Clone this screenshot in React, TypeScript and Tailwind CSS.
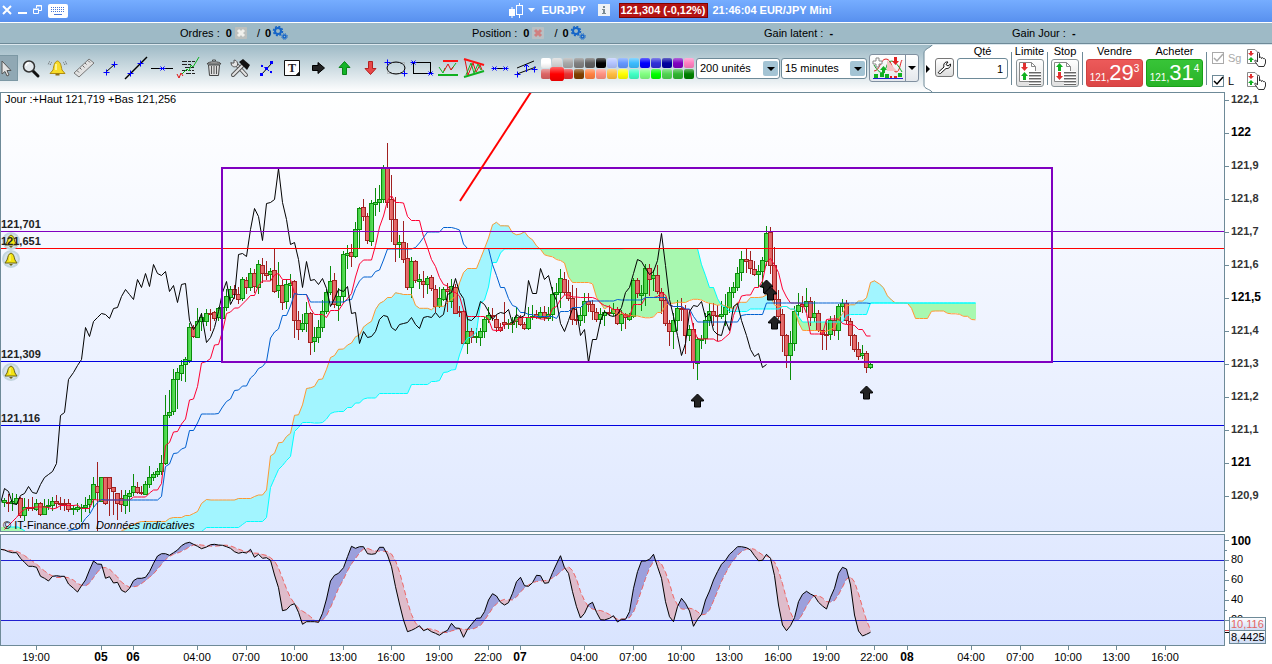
import type { ReactNode } from 'react';
import { clsx } from 'clsx';

const FONT = 'font-["Liberation_Sans",Arial,sans-serif]';

/* ---------- market data (plot units) ---------- */

// g = up, r = down; high/body top/body bottom/low
const RAW = `g498/500/502/506 r494/502/502/511 g493/501/503/510 g494/498/503/504 r497/498/515/517 g498/507/515/520
r499/507/508/510 r497/507/508/510 g499/503/509/510 r502/503/514/515 g499/506/514/514 g499/505/506/509
g497/501/505/510 r495/501/503/507 r497/503/503/509 r499/503/504/510 r499/503/509/511 g505/508/509/514
g503/507/509/511 g504/507/508/521 g497/505/507/511 g495/499/504/512 g477/484/499/507 r462/486/492/537
g477/477/501/501 r477/477/503/504 r477/477/488/515 r487/487/491/514 r493/493/503/519 r490/498/504/511
g490/495/505/513 g490/493/496/511 g474/486/492/495 r482/487/492/493 r486/492/493/494 g481/484/494/494
g466/477/484/487 g472/474/477/480 g468/471/474/476 g455/463/471/474 g395/415/463/464 g390/412/415/417
g369/379/411/414 g368/372/379/408 g360/365/373/380 g357/359/364/381 g323/327/360/362 r325/327/336/337
g308/321/337/337 g313/317/321/330 g309/313/321/325 r309/313/314/330 r311/312/318/320 g307/308/317/320
g300/307/318/322 g289/296/307/310 g286/289/297/300 r285/289/294/298 r287/294/299/303 g277/279/298/300
r277/280/287/293 g268/273/287/290 r269/273/286/292 g260/264/287/293 r258/265/273/282 r261/273/275/279
g268/271/274/280 r249/270/291/292 g262/285/290/297 r280/285/302/309 g279/284/301/308 g274/283/285/297
r280/281/320/337 r311/320/329/339 g314/323/329/331 g302/313/323/331 r312/313/342/354 g327/337/341/351
g320/327/337/342 g300/311/327/331 g289/292/311/313 g266/281/292/294 r273/280/304/307 g288/296/305/320
g251/254/296/302 g245/253/255/268 r244/252/256/266 g222/229/256/257 g207/208/229/247 r199/207/216/220
r213/216/240/243 g200/203/241/245 g188/202/204/215 g185/199/202/211 g165/168/199/202 r143/168/202/207
r175/199/219/241 r197/219/244/261 g235/242/244/257 r221/242/259/262 r243/258/287/289 g257/261/287/297
r260/261/280/282 g274/279/281/288 r271/281/284/297 g276/278/284/293 r275/277/288/290 r285/289/306/311
g287/298/306/307 g287/289/299/300 r283/289/291/311 g279/286/301/307 r284/287/313/313 r306/311/312/316
r310/311/343/344 g317/331/343/353 r328/331/337/342 g328/336/337/342 g328/331/337/345 g317/319/331/337
g307/315/319/322 r308/315/316/320 r315/319/327/331 r323/327/330/331 r302/322/324/328 g319/323/324/328
g317/322/324/332 g307/317/321/327 r315/317/324/325 r322/324/328/329 g307/317/328/329 g305/316/317/319
r310/314/317/318 g307/312/317/318 r306/312/317/320 g307/314/318/320 g287/294/314/320 g283/292/294/300
g269/278/292/307 r272/279/292/294 r280/292/298/300 r285/298/319/324 r288/319/320/324 g307/315/320/325
g293/301/315/322 r293/301/304/311 r300/304/311/319 r308/312/319/321 g308/314/319/323 g310/312/315/325
r305/312/313/315 g303/309/313/315 r307/309/323/324 g310/314/323/330 r313/314/317/328 g313/315/319/320
g278/280/316/317 r278/280/293/297 g285/293/295/310 g264/268/293/305 r264/268/279/295 g270/275/278/290
r265/275/291/293 r288/292/300/313 r297/300/323/325 r320/323/331/345 g313/320/331/348 g300/308/320/330
r298/308/309/320 r305/309/335/353 g325/329/335/340 r323/329/362/368 g337/339/363/379 g335/339/340/348
g313/320/338/343 g303/311/320/325 r303/311/315/325 r305/315/316/340 g301/314/316/318 g294/307/314/325
g287/292/307/312 g282/287/292/297 g267/273/287/290 g251/259/272/280 r249/259/261/272 r251/260/268/273
r261/269/274/275 g265/271/274/286 g257/260/271/287 g226/233/261/265 r227/232/265/273 r247/265/299/303
r290/299/316/318 r309/314/335/351 r334/335/355/367 g331/343/355/379 g306/311/343/350 g293/305/311/315
r296/304/306/312 g288/301/306/312 r297/301/317/325 g301/313/317/321 r310/313/330/331 r330/330/334/349
r320/334/335/349 g316/320/334/339 r315/320/330/335 g304/306/330/339 g299/303/306/311 r300/303/320/323
r318/321/335/345 r334/335/349/351 r342/349/356/359 g345/353/355/358 r351/353/367/372 g363/364/367/368`;

type Candle = { up: boolean; high: number; top: number; bottom: number; low: number };
type Point = [number, number];

const CANDLES: Candle[] = RAW.split(/\s+/).map((token) => {
	const [high, top, bottom, low] = token.slice(1).split('/').map(Number);
	return { up: token[0] === 'g', high, top, bottom, low };
});

// %K, in thirds of a unit below the top of the pane
const STOCH = [
	73, 75, 80, 83, 83, 100, 112, 124, 124, 127, 154, 160, 168, 154, 152, 154, 154, 177, 190, 201, 182, 165, 135, 108,
	117, 118, 160, 155, 174, 172, 196, 202, 190, 167, 160, 160, 157, 140, 115, 93, 86, 86, 91, 83, 75, 62, 55, 52, 58,
	64, 71, 66, 59, 58, 60, 61, 65, 70, 80, 85, 82, 84, 73, 97, 88, 100, 98, 106, 150, 188, 257, 254, 241, 236, 262,
	298, 290, 290, 290, 292, 265, 222, 168, 151, 145, 128, 95, 64, 70, 65, 65, 86, 88, 86, 67, 67, 90, 125, 185, 237,
	285, 320, 316, 310, 302, 317, 312, 320, 325, 331, 322, 316, 295, 309, 310, 337, 313, 298, 280, 279, 260, 225, 206,
	213, 232, 240, 233, 205, 170, 157, 182, 184, 173, 151, 152, 175, 173, 143, 117, 92, 128, 145, 200, 245, 279, 265,
	239, 232, 262, 284, 285, 280, 272, 291, 283, 283, 260, 190, 140, 108, 108, 103, 88, 125, 160, 230, 275, 290, 245,
	220, 235, 258, 304, 283, 268, 225, 198, 165, 140, 118, 106, 88, 77, 65, 65, 68, 75, 92, 107, 106, 88, 100, 152,
	240, 300, 317, 302, 278, 230, 208, 199, 207, 213, 232, 243, 252, 217, 190, 145, 127, 132, 180, 270, 318, 333, 328,
	322,
];

const xAt = (i: number) => Math.round(4 + i * 4.03) + 0.5;
const close = (c: Candle) => (c.up ? c.top : c.bottom);

function midpoint(i: number, period: number) {
	const part = CANDLES.slice(i - period + 1, i + 1);
	return (Math.min(...part.map((c) => c.high)) + Math.max(...part.map((c) => c.low))) / 2;
}

const TENKAN_START = [529, 525, 521, 517, 512, 509, 507, 507];
const KIJUN_START = [530, 529, 529, 524, 518, 514, 507, 502, 499];
const SPAN_A_START = [
	530, 529, 526, 524, 522, 521, 521, 521, 521, 521, 521, 521, 518, 517, 517, 517, 515, 515, 513, 511, 503, 499,
];
const SPAN_B_START = [
	...Array(20).fill(540),
	531, 527, 527, 527, 527, 527, 527, 527, 527, 527, 524, 521, 521, 521, 521, 521, 517, 487, 478, 469, 465, 460, 456,
	431, 427, 422, 422, 422,
];

const tenkanAt = (i: number) => (i < 8 ? TENKAN_START[i] : midpoint(i, 9));
const kijunAt = (i: number) => (i < 25 ? KIJUN_START[i - 16] : midpoint(i, 26));
const spanAAt = (i: number) => (i < 51 ? SPAN_A_START[i - 29] : (tenkanAt(i - 26) + kijunAt(i - 26)) / 2);
const spanBAt = (i: number) => (i < 77 ? SPAN_B_START[i - 29] : midpoint(i - 26, 52));

function series(from: number, to: number, fn: (i: number) => number): Point[] {
	return Array.from({ length: to - from + 1 }, (_, n) => [xAt(from + n), fn(from + n)] as Point);
}

const TENKAN = series(0, 215, tenkanAt);
const KIJUN = series(16, 215, kijunAt);
const SPAN_A = series(29, 241, spanAAt);
const SPAN_B = series(29, 241, spanBAt);
const CHIKOU = series(-1, 189, (i) => close(CANDLES[i + 26]));
const STOCH_K: Point[] = STOCH.map((v, n) => [xAt(n - 1), 525 + v / 3]);
const STOCH_D: Point[] = STOCH_K.map(([x], n) => {
	const part = STOCH_K.slice(Math.max(0, n - 4), n + 1);
	return [x, part.reduce((sum, p) => sum + p[1], 0) / part.length];
});

const line = (points: Point[]) => points.map(([x, y]) => `${x.toFixed(1)},${y.toFixed(1)}`).join(' ');

// splits the area between two curves into the part where a is above b, and the rest
function band(a: Point[], b: Point[]) {
	let above = '';
	let below = '';
	for (let n = 0; n < a.length - 1; n++) {
		const [x0, a0] = a[n];
		const [x1, a1] = a[n + 1];
		const b0 = b[n][1];
		const b1 = b[n + 1][1];
		const d0 = b0 - a0;
		const d1 = b1 - a1;
		if (d0 * d1 < 0) {
			const t = d0 / (d0 - d1);
			const cx = x0 + (x1 - x0) * t;
			const cy = a0 + (a1 - a0) * t;
			const left = `M${x0} ${a0}L${cx} ${cy}L${x0} ${b0}Z`;
			const right = `M${x1} ${a1}L${cx} ${cy}L${x1} ${b1}Z`;
			above += d0 > 0 ? left : right;
			below += d0 > 0 ? right : left;
		} else {
			const quad = `M${x0} ${a0}L${x1} ${a1}L${x1} ${b1}L${x0} ${b0}Z`;
			if (d0 + d1 >= 0) above += quad;
			else below += quad;
		}
	}
	return { above, below };
}

const CLOUD = band(SPAN_A, SPAN_B);
const STOCH_BAND = band(STOCH_K, STOCH_D);

/* ---------- charts ---------- */

const PRICES = ['122,1', '122', '121,9', '121,8', '121,7', '121,6', '121,5', '121,4', '121,3', '121,2', '121,1', '121', '120,9'];
const ROUND_PRICES = ['122', '121,5', '121'];

const LEVELS = [
	{ label: '121,701', y: 231, color: '#8000c0' },
	{ label: '121,651', y: 248, color: '#ff0000' },
	{ label: '121,309', y: 361, color: '#0000e0' },
	{ label: '121,116', y: 425, color: '#0000e0' },
];

const TIMES: [number, string][] = [
	[36, '19:00'], [101, '05'], [133, '06'], [197, '04:00'], [246, '07:00'], [294, '10:00'], [343, '13:00'],
	[391, '16:00'], [439, '19:00'], [488, '22:00'], [520, '07'], [584, '04:00'], [633, '07:00'], [681, '10:00'],
	[729, '13:00'], [778, '16:00'], [826, '19:00'], [874, '22:00'], [907, '08'], [971, '04:00'], [1020, '07:00'],
	[1068, '10:00'], [1116, '13:00'], [1165, '16:00'],
];

function AlertBell({ x, y }: { x: number; y: number }) {
	return (
		<g transform={`translate(${x} ${y})`}>
			<circle r="9" fill="#c3d5de" />
			<circle r="7" fill="#d6e2ea" />
			<path d="M0 -6C-3 -5 -3 -2 -4 1L-6 4H6L4 1C3 -2 3 -5 0 -6Z" fill="#f3e312" stroke="#6b6414" />
			<path d="M-2 5H2L0 7Z" fill="#6b6414" />
			<path d="M-1 -4V2" stroke="#fff9a0" />
		</g>
	);
}

function UpArrow({ x, y }: { x: number; y: number }) {
	return <path transform={`translate(${x} ${y})`} d="M0.5 -6L6.5 0V1H3.5V7H-2.5V1H-5.5V0Z" fill="#222" stroke="#000" />;
}

function PriceChart() {
	return (
		<svg viewBox="0 92 1272 440" className="block w-full" role="img" aria-label="EURJPY 15 minutes">
			<defs>
				<linearGradient id="priceBg" x1="0" y1="0" x2="0" y2="1">
					<stop offset="0" stopColor="#ffffff" />
					<stop offset="1" stopColor="#e0e9ff" />
				</linearGradient>
				<linearGradient id="upBody">
					<stop offset="0" stopColor="#3cc83c" />
					<stop offset="1" stopColor="#62e862" />
				</linearGradient>
				<linearGradient id="downBody">
					<stop offset="0" stopColor="#f07474" />
					<stop offset="1" stopColor="#d85c5c" />
				</linearGradient>
				<clipPath id="pricePlot">
					<rect x="1" y="93" width="1223" height="438" />
				</clipPath>
			</defs>
			<rect x="0" y="92" width="1225" height="440" fill="#6e8a98" />
			<rect x="1" y="93" width="1223" height="438" fill="url(#priceBg)" />
			<g clipPath="url(#pricePlot)">
				<path d="M0 527H18L25 531H0Z" fill="#a8f8b0" />
				<path d="M6 527H18L25 531" fill="none" stroke="#00ffff" />
				<g shapeRendering="crispEdges">
					<path d={CLOUD.above} fill="#a2f5ff" />
					<path d={CLOUD.below} fill="#a8f8b0" />
					{CANDLES.map((c, i) => {
						const x = xAt(i);
						const stroke = c.up ? '#0a8c0a' : '#a02020';
						return (
							<g key={i} stroke={stroke}>
								<path d={`M${x} ${c.high}V${c.low + 1}`} />
								<rect
									x={x - 2}
									y={c.top + 0.5}
									width="4"
									height={Math.max(c.bottom - c.top, 1)}
									fill={c.up ? 'url(#upBody)' : 'url(#downBody)'}
								/>
							</g>
						);
					})}
				</g>
				<g fill="none" strokeWidth="1" transform="translate(0 0.5)">
					<polyline points={line(SPAN_A)} stroke="#ff9933" />
					<polyline points={line(SPAN_B)} stroke="#00ffff" />
					<polyline points={line(TENKAN)} stroke="#ff0033" />
					<polyline points={line(KIJUN)} stroke="#0060d0" />
					<polyline points={line(SPAN_B.slice(186))} stroke="#00ffff" />
					<polyline points={line(CHIKOU)} stroke="#000" />
				</g>
				<g shapeRendering="crispEdges">
					{LEVELS.map((l) => (
						<rect key={l.label} x="0" y={l.y} width="1224" height="1" fill={l.color} />
					))}
				</g>
				<rect x="222" y="168" width="830" height="194" fill="none" stroke="#8000c0" strokeWidth="2" />
				<path d="M460 201L531 92" stroke="#f00" strokeWidth="2" />
				<AlertBell x={11} y={241} />
				<AlertBell x={11} y={259} />
				<AlertBell x={11} y={372} />
				<UpArrow x={766} y={286} />
				<UpArrow x={770} y={293} />
				<UpArrow x={774} y={322} />
				<UpArrow x={697} y={400} />
				<UpArrow x={866} y={392} />
			</g>
			<g fontSize="11" fill="#000">
				{LEVELS.map((l) => (
					<text key={l.label} x="1" y={l.y - 3} fontWeight="700" fill="#222">{l.label}</text>
				))}
				<text x="5" y="103">Jour :+Haut 121,719 +Bas 121,256</text>
				<text x="3" y="529">© IT-Finance.com</text>
				<text x="96" y="529" fontStyle="italic">Données indicatives</text>
				{PRICES.map((p, n) => (
					<g key={p} fontWeight="700">
						<rect x="1225" y={100 + 33 * n} width="4" height="1" fill="#6e8a98" />
						<text
							x="1231"
							y={103 + 33 * n}
							fontSize={ROUND_PRICES.includes(p) ? 12 : 11}
							fill={ROUND_PRICES.includes(p) ? '#000' : '#333'}>
							{p}
						</text>
					</g>
				))}
			</g>
		</svg>
	);
}

function StochasticChart() {
	return (
		<svg viewBox="0 532 1272 132" className="block w-full" role="img" aria-label="Stochastique">
			<defs>
				<linearGradient id="stochBg" x1="0" y1="0" x2="0" y2="1">
					<stop offset="0" stopColor="#e2eaff" />
					<stop offset="1" stopColor="#d9e4fe" />
				</linearGradient>
				<linearGradient id="tagBg" x1="0" y1="0" x2="0" y2="1">
					<stop offset="0" stopColor="#ffffff" />
					<stop offset="1" stopColor="#ccdaf4" />
				</linearGradient>
				<clipPath id="stochPlot">
					<rect x="1" y="535" width="1223" height="110" />
				</clipPath>
			</defs>
			<rect x="0" y="534" width="1225" height="112" fill="#6e8a98" />
			<rect x="1" y="535" width="1223" height="110" fill="url(#stochBg)" />
			<g clipPath="url(#stochPlot)" fill="none">
				<g shapeRendering="crispEdges">
					<path d={STOCH_BAND.above} fill="#9ca0dc" />
					<path d={STOCH_BAND.below} fill="#dfbccb" />
				</g>
				<polyline points={line(STOCH_D)} stroke="#ee6666" strokeDasharray="5 3" />
				<rect x="0" y="560" width="1224" height="1" fill="#2020d0" />
				<rect x="0" y="620" width="1224" height="1" fill="#2020d0" />
				<polyline points={line(STOCH_K)} stroke="#000" />
			</g>
			<g fontSize="11" fill="#000">
				{[100, 90, 80, 70, 60, 50, 40, 30, 20].map((v) => (
					<rect key={v} x="1225" y={640 - v} width={v % 20 ? 2 : 4} height="1" fill="#6e8a98" />
				))}
				<text x="1231" y="545" fontSize="12" fontWeight="700">100</text>
				<text x="1231" y="563">80</text>
				<text x="1231" y="583">60</text>
				<text x="1231" y="603">40</text>
				<text x="1231" y="623">20</text>
				<rect x="1225" y="630" width="4" height="1" fill="#e05050" />
				<rect x="1225" y="632" width="4" height="1" />
				<rect x="1229.5" y="617.5" width="36" height="13" fill="url(#tagBg)" stroke="#6e8a98" />
				<rect x="1229.5" y="630.5" width="36" height="13" fill="url(#tagBg)" stroke="#6e8a98" />
				<text x="1231" y="628" fill="#e46464">10,116</text>
				<text x="1231" y="641">8,4425</text>
				{TIMES.map(([x, label]) => (
					<g key={x} textAnchor="middle">
						<rect x={x} y="646" width="1" height="4" fill="#6e8a98" />
						<text x={x} y="661" fontSize={label.length === 2 ? 12 : 11} fontWeight={label.length === 2 ? 700 : 400}>
							{label}
						</text>
					</g>
				))}
			</g>
		</svg>
	);
}

/* ---------- toolbar ---------- */

const BLUE = '#0000ff';
const cross = (x: number, y: number) => `M${x - 3} ${y}H${x + 3}M${x} ${y - 3}V${y + 3}`;
const xmark = (x: number, y: number) => `M${x - 2} ${y - 2}L${x + 2} ${y + 2}M${x + 2} ${y - 2}L${x - 2} ${y + 2}M${x - 3} ${y}H${x + 3}`;

const TOOLS: { label: string; icon: ReactNode }[] = [
	{
		label: 'Zoom',
		icon: (
			<>
				<path d="M15 16L20 21" stroke="#111" strokeWidth="3" strokeLinecap="round" />
				<circle cx="11" cy="11.5" r="5.5" fill="#e4eaee" stroke="#333" strokeWidth="1.5" />
				<path d="M8 11A3 3 0 0 1 11 8" stroke="#fff" strokeWidth="1.5" />
			</>
		),
	},
	{
		label: 'Alerte',
		icon: (
			<>
				<path d="M13.5 6C10 7 10 11 9 15L6 18.5H21L18 15C17 11 17 7 13.5 6Z" fill="#f8dc28" stroke="#b08c10" />
				<path d="M12 9V15" stroke="#fffbb0" strokeWidth="1.5" />
				<path d="M11.5 19.5H15.5" stroke="#907010" strokeWidth="2" />
				<path d="M7.5 7.5L6 10M5.5 6.5L4 10M19.5 7.5L21 10M21.5 6.5L23 10" stroke="#555" strokeDasharray="1 1" />
			</>
		),
	},
	{
		label: 'Règle',
		icon: (
			<>
				<path d="M4 18L19 4L24 8L9 22Z" fill="#e2e2e2" stroke="#777" />
				<path d="M7 15.5L9 17.5M10 13L11.5 14.5M12.5 10.5L14.5 12.5M15 8L16.5 9.5M18 5.5L20 7.5" stroke="#666" />
			</>
		),
	},
	{
		label: 'Segment',
		icon: (
			<>
				<path d="M10 17L19 9" stroke="#000" />
				<path d={cross(10.5, 17.5) + cross(18.5, 9.5)} stroke={BLUE} />
			</>
		),
	},
	{
		label: 'Droite',
		icon: (
			<>
				<path d="M3 24L25 2" stroke="#000" strokeWidth="1.5" />
				<path d={cross(8.5, 18.5) + cross(18.5, 8.5)} stroke={BLUE} />
			</>
		),
	},
	{
		label: 'Ligne horizontale',
		icon: (
			<>
				<path d="M3 13.5H25" stroke="#000" />
				<path d={xmark(14.5, 13.5)} stroke={BLUE} />
			</>
		),
	},
	{
		label: 'Analyse',
		icon: (
			<>
				<path d="M8 6.5H21M8 9.5H18M11 12.5H20M8 15.5H20M12 18.5H21" stroke="#222" strokeDasharray="5 1 3 1" />
				<path d="M8 19L13 14L15 16L17 10L19 12L25 2" stroke="#10b020" />
				<path d="M3 19L5 23L7 18L9 21" stroke="#e01010" />
			</>
		),
	},
	{
		label: 'Supprimer',
		icon: (
			<>
				<path d="M8.5 10L9.5 20.5H18.5L19.5 10Z" fill="#ddd" stroke="#444" />
				<path d="M11.5 11V19M14 11V19M16.5 11V19" stroke="#555" />
				<path d="M7 9C8 6 20 6 21 9Z" fill="#bbb" stroke="#444" />
				<path d="M12.5 6V5H15.5V6" stroke="#444" />
			</>
		),
	},
	{
		label: 'Options',
		icon: (
			<>
				<path d="M10 9L20 20" stroke="#555" strokeWidth="4" strokeLinecap="round" />
				<path d="M10 9L20 20" stroke="#e4e4e4" strokeWidth="2" strokeLinecap="round" />
				<path d="M5 7.5C5 12 9 13 11.5 10.5C12 8 11 5 8 5V8H5Z" stroke="#555" fill="#e4e4e4" />
				<path d="M7 20L16 11" stroke="#555" strokeWidth="4" strokeLinecap="round" />
				<path d="M7 20L16 11" stroke="#e4e4e4" strokeWidth="2" strokeLinecap="round" />
				<path d="M13 7L17 4L24 10L21 15L18 12Z" fill="#111" />
			</>
		),
	},
	{
		label: 'Fibonacci',
		icon: (
			<>
				<path d="M9 20L20 8" stroke="#000" />
				<path d="M9 10L20 18" stroke={BLUE} strokeDasharray="2 2" />
				<path d="M8 18H11V21H8ZM18 6H21V9H18ZM13 12H16V15H13ZM9 10H11V12H9ZM18 16H20V18H18Z" fill={BLUE} />
			</>
		),
	},
	{
		label: 'Texte',
		icon: (
			<>
				<path d="M6.5 5.5H21.5V17L18 20.5H6.5Z" fill="#fff" stroke="#111" />
				<path d="M22 16V21H17Z" fill="#111" />
				<text x="14" y="17" textAnchor="middle" fontSize="12" fontWeight="700" fill="#222" className='font-["Liberation_Serif",serif]'>T</text>
			</>
		),
	},
	{ label: 'Flèche droite', icon: <path d="M8.5 10.5H14V7.5L20.5 13L14 18.5V15.5H8.5Z" fill="#222" stroke="#000" /> },
	{ label: 'Flèche haut', icon: <path d="M14.5 6.5L20 12.5H16.5V19.5H12.5V12.5H9Z" fill="#14b428" stroke="#0a8418" /> },
	{ label: 'Flèche bas', icon: <path d="M14.5 19.5L20 13.5H16.5V6.5H12.5V13.5H9Z" fill="#e84848" stroke="#b42020" /> },
	{
		label: 'Ellipse',
		icon: (
			<>
				<rect x="5.5" y="7.5" width="17" height="11" stroke="#999" strokeDasharray="1 1" />
				<ellipse cx="14" cy="13" rx="9" ry="6" stroke="#000" />
				<path d={cross(5.5, 7.5) + cross(22.5, 18.5)} stroke={BLUE} />
			</>
		),
	},
	{
		label: 'Rectangle',
		icon: (
			<>
				<rect x="5.5" y="7.5" width="17" height="11" stroke="#000" />
				<path d={xmark(5.5, 7.5) + xmark(22.5, 18.5)} stroke={BLUE} />
			</>
		),
	},
	{
		label: 'Supports',
		icon: (
			<>
				<path d="M9 6H24" stroke="#ff1010" strokeWidth="2" />
				<path d="M4 20H24" stroke="#10b020" strokeWidth="2" />
				<path d="M5 12L9 18L11 13M17 15L22 8" stroke="#10b020" />
				<path d="M10 16L14 9L17 15L19 12" stroke="#e01010" />
			</>
		),
	},
	{
		label: 'Figures',
		icon: (
			<>
				<path d="M4 4L24 10" stroke="#ff1010" strokeWidth="2" />
				<path d="M4 22L24 16" stroke="#10b020" strokeWidth="2" />
				<path d="M5 5L8 20L13 8L16 17L20 10L22 15" stroke="#e01010" />
				<path d="M6 20L11 8L14 18L18 9L21 15" stroke="#10b020" />
			</>
		),
	},
	{
		label: 'Distance',
		icon: (
			<>
				<path d="M8 13.5H20" stroke="#000" />
				<path d={xmark(8.5, 13.5) + xmark(19.5, 13.5)} stroke={BLUE} />
			</>
		),
	},
	{
		label: 'Canal',
		icon: (
			<>
				<path d="M5 13L22 6M5 19L24 12" stroke="#000" />
				<path d={cross(5.5, 19.5) + cross(22.5, 14.5)} stroke={BLUE} />
				<path d="M14.5 17V10M12 12L14.5 9.5L17 12" stroke={BLUE} />
			</>
		),
	},
];

const PALETTE = [
	'bg-white', 'bg-[#d4d4d4]', 'bg-[#a8a8a8]', 'bg-[#808080]', 'bg-[#606060]', 'bg-black', 'bg-[#b4c4ff]',
	'bg-[#6496ff]', 'bg-[#3cbcff]', 'bg-[#0000ff]', 'bg-[#3030d8]', 'bg-[#0000a0]', 'bg-[#8000c0]', 'bg-[#ff80c0]',
	'bg-[#dc6464]', 'bg-[#ff0000]', 'bg-[#e63232]', 'bg-[#804000]', 'bg-[#ff8040]', 'bg-[#ff9080]', 'bg-[#ffbc40]',
	'bg-[#ffff00]', 'bg-[#40ffc4]', 'bg-[#80ff80]', 'bg-[#00ff00]', 'bg-[#50d450]', 'bg-[#30b430]', 'bg-[#008000]',
];

function Gears() {
	return (
		<svg width="16" height="14" viewBox="0 0 16 14" fill="none" aria-hidden="true">
			<circle cx="6" cy="5" r="3" stroke="#1464c8" strokeWidth="2" />
			<circle cx="6" cy="5" r="4.5" stroke="#1464c8" strokeWidth="1.5" strokeDasharray="2 1.5" />
			<circle cx="12.5" cy="10.5" r="1.5" stroke="#1464c8" strokeWidth="1.5" />
			<circle cx="12.5" cy="10.5" r="2.8" stroke="#1464c8" strokeDasharray="1.2 1" />
		</svg>
	);
}

function CancelMark({ cross: stroke, box }: { cross: string; box: string }) {
	return (
		<svg width="12" height="12" viewBox="0 0 12 12" aria-hidden="true">
			<rect width="12" height="12" rx="1" fill={box} />
			<path d="M3 3L9 9M9 3L3 9" stroke={stroke} strokeWidth="3" />
		</svg>
	);
}

function Drop({ label, options, className }: { label: string; options: string[]; className: string }) {
	return (
		<div className={clsx('relative h-[21px]', className)}>
			<select
				aria-label={label}
				className="h-full w-full appearance-none rounded-[3px] border border-[#6e8a98] bg-white pl-[3px] text-[11px] leading-none">
				{options.map((o) => (
					<option key={o}>{o}</option>
				))}
			</select>
			<span className="pointer-events-none absolute right-[2px] top-[3px] flex h-[15px] w-[15px] items-center justify-center rounded-[2px] bg-[#a4c4d4]">
				<svg width="8" height="4" viewBox="0 0 8 4"><path d="M0 0H8L4 4Z" /></svg>
			</span>
		</div>
	);
}

const RED_DOWN = 'M7 0H10V4H12L8.5 8L5 4H7Z';
const GREEN_UP = 'M8.5 0L12 4H10V8H7V4H5Z';

function OrderIcon({ stop }: { stop?: boolean }) {
	return (
		<svg width="26" height="26" viewBox="0 0 26 26" fill="none" aria-hidden="true">
			<path d="M2.5 2.5H14.5L18.5 6.5V21.5H2.5Z" fill="#fff" stroke="#888" />
			<path d="M14.5 2.5V6.5H18.5" stroke="#888" />
			<path transform="translate(-1 3)" d={stop ? GREEN_UP : RED_DOWN} fill={stop ? '#10b020' : '#e03030'} />
			<path transform="translate(-1 12)" d={stop ? RED_DOWN : GREEN_UP} fill={stop ? '#e03030' : '#10b020'} />
			<path d="M12 11H24V25H12Z" fill="#fff" />
			<path d="M12 12.5H24M12 15.5H24M12 18.5H24M12 21.5H24M12 24.5H24" stroke="#666" />
			<path d="M12 13.5H24M12 16.5H24M12 19.5H24M12 22.5H24" stroke="#bbb" />
		</svg>
	);
}

function HandIcon() {
	return (
		<svg width="20" height="20" viewBox="0 0 20 20" fill="none" aria-hidden="true">
			<path d="M0.5 0.5H8L10.5 3V14.5H0.5Z" fill="#fff" stroke="#888" />
			<path d="M3 2H5V4H7L4 7L1 4H3Z" fill="#e03030" />
			<path d="M4 8L7 11H5V13H3V11H1Z" fill="#10b020" />
			<path
				d="M10.5 13V4.5C10.5 3 12.5 3 12.5 4.5V9C12.5 7.5 14.5 8 14.5 9.5C14.5 8 16.5 8.5 16.5 10C16.5 9 18.5 9.5 18.5 11V14L17 17.5H11.5L8 12.5C7 11 9 10.5 10.5 13Z"
				fill="#fff"
				stroke="#333"
			/>
		</svg>
	);
}

function Divider({ className }: { className?: string }) {
	return <span className={clsx('mt-[7px] h-[33px] w-px shrink-0 bg-[#6e8a98]', className)} />;
}

function Quote({ label, price, className }: { label: string; price: [string, string, string]; className: string }) {
	return (
		<div className="ml-[3px] w-[57px] shrink-0 text-center">
			<span className="block h-[14px] leading-[13px]">{label}</span>
			<button
				aria-label={label}
				className={clsx('flex h-7 w-full items-end justify-center rounded-[3px] border text-white', className)}>
				<span className="text-[10px] leading-[16px]">{price[0]}</span>
				<span className="text-[22px] leading-[27px]">{price[1]}</span>
				<span className="self-start text-[10px] leading-[18px]">{price[2]}</span>
			</button>
		</div>
	);
}

function Check({ label, disabled }: { label: string; disabled?: boolean }) {
	return (
		<label className={clsx('flex h-[12px] items-center gap-1', disabled ? 'text-[#aaa]' : 'text-black')}>
			<span className="relative h-[12px] w-[12px]">
				<input
					type="checkbox"
					defaultChecked
					disabled={disabled}
					className={clsx('block h-[12px] w-[12px] appearance-none border bg-white', disabled ? 'border-[#aaa]' : 'border-[#6e8a98]')}
				/>
				<svg width="12" height="12" viewBox="0 0 12 12" className="pointer-events-none absolute left-0 top-0">
					<path d="M2 6L5 9L11 2" fill="none" stroke="currentColor" strokeWidth="1.5" />
				</svg>
			</span>
			{label}
		</label>
	);
}

function OrderPanel() {
	return (
		<div className="ml-auto flex h-[47px] shrink-0">
			<svg width="10" height="47" viewBox="0 0 10 47" aria-hidden="true">
				<path d="M10 0C7 3 1 4 1 8V40C1 44 7 44 10 47Z" fill="#fff" />
				<path d="M9 0C7 3 1 4 1 8V40C1 44 7 44 9 47" fill="none" stroke="#6e8a98" />
				<path d="M3 20V28L7 24Z" />
			</svg>
			<div className="flex w-[339px] bg-white">
				<button
					aria-label="Paramètres"
					className="ml-[2px] mt-[13px] flex h-[19px] w-[19px] shrink-0 items-center justify-center rounded-[3px] border border-[#777] bg-gradient-to-b from-white to-[#ddd]">
					<svg width="15" height="15" viewBox="0 0 15 15" fill="none" aria-hidden="true">
						<path d="M1.5 12L7 7C6 4 8 1.5 11 2L9 4.5L11 6L13.5 4C14 7 11.5 9 9 8.5L3.5 13.5C2 14 1 13 1.5 12Z" fill="#fff" stroke="#111" />
					</svg>
				</button>
				<label className="ml-[3px] w-[51px] shrink-0 text-center">
					<span className="block h-[13px] leading-[13px]">Qté</span>
					<input
						defaultValue="1"
						className="h-[21px] w-full rounded-[3px] border border-[#6e8a98] bg-white pr-1 text-right text-[11px]"
					/>
				</label>
				<Divider className="ml-[3px]" />
				<div className="w-[35px] shrink-0 text-center">
					<span className="block h-[14px] leading-[13px]">Limite</span>
					<button aria-label="Limite" className="mx-auto block h-7 w-7 rounded-[3px] border border-[#8a9498] bg-gradient-to-b from-white to-[#e0e0e0]">
						<OrderIcon />
					</button>
				</div>
				<Divider />
				<div className="w-[34px] shrink-0 text-center">
					<span className="block h-[14px] leading-[13px]">Stop</span>
					<button aria-label="Stop" className="mx-auto block h-7 w-7 rounded-[3px] border border-[#8a9498] bg-gradient-to-b from-white to-[#e0e0e0]">
						<OrderIcon stop />
					</button>
				</div>
				<Divider />
				<Quote label="Vendre" price={['121,', '29', '3']} className="border-[#d04040] bg-gradient-to-b from-[#ec5a5a] to-[#dc4646]" />
				<Quote label="Acheter" price={['121,', '31', '4']} className="border-[#18a018] bg-gradient-to-b from-[#38c438] to-[#28b428]" />
				<Divider className="ml-[3px]" />
				<div className="ml-[5px] flex w-[35px] shrink-0 flex-col gap-[11px] pt-[7px]">
					<Check label="Sg" disabled />
					<Check label="L" />
				</div>
				<div className="flex shrink-0 flex-col gap-[3px] pt-[4px]">
					<button aria-label="Ordre Sg"><HandIcon /></button>
					<button aria-label="Ordre L"><HandIcon /></button>
				</div>
			</div>
		</div>
	);
}

function Toolbar() {
	return (
		<div className="flex h-[47px] items-start bg-gradient-to-b from-[#9ebac6] to-white">
			<button aria-label="Curseur" className="mt-[10px] h-[26px] w-[18px] shrink-0 border border-l-0 border-[#7c98a4] bg-[#90a8b4]">
				<svg width="14" height="24" viewBox="0 0 14 24" aria-hidden="true">
					<path d="M2 5V18L5 15.5L7 20L9 19L7 14.5H11Z" fill="#e4e4e4" stroke="#555" />
				</svg>
			</button>
			{TOOLS.map((tool) => (
				<button key={tool.label} aria-label={tool.label} className="mt-[10px] w-[26px] shrink-0">
					<svg width="26" height="26" viewBox="0 0 26 26" fill="none" aria-hidden="true">{tool.icon}</svg>
				</button>
			))}
			<div className="ml-[3px] mt-[13px] grid shrink-0 grid-cols-14 gap-px">
				{PALETTE.map((color, n) => (
					<button
						key={color}
						aria-label={`Couleur ${n + 1}`}
						className={clsx(
							'h-[10px] w-[10px] rounded-[2px] bg-gradient-to-b from-white/40 via-transparent to-black/10',
							color,
							n === 15 && 'z-10 scale-140',
						)}
					/>
				))}
			</div>
			<Drop label="Unités" options={['200 unités']} className="ml-[2px] mt-[13px] w-[84px] shrink-0" />
			<Drop label="Période" options={['15 minutes']} className="ml-px mt-[13px] w-[86px] shrink-0" />
			<div className="ml-[2px] mt-[9px] flex h-[28px] w-[50px] shrink-0 rounded-[3px] border border-[#8090a0] bg-gradient-to-b from-white to-[#e4e8ec]">
				<button aria-label="Indicateurs" className="w-[35px]">
					<svg width="34" height="26" viewBox="0 0 34 26" fill="none" aria-hidden="true">
						<path d="M4 16C10 16 10 4 16 4C22 4 22 17 26 17C30 17 30 8 32 5" stroke="#e02020" />
						<path d="M4 10C10 20 14 20 17 10C20 4 25 4 32 17" stroke="#10a020" />
						<path d="M17 5L27 16H17Z" fill="#f6c4c4" />
						<path d="M6 3H9V6H12V9H9V12H6V9H3V6H6Z" fill="#fff" stroke="#888" />
						<path d="M13.5 11L17 15H15V18H12V15H10Z" fill="#10b020" />
						<path d="M25.5 10L29 6H27V2H24V6H22Z" fill="#e02020" />
						<path d="M4 21H8M10 20H14M15 21H19M28 20H32" stroke="#10b020" strokeWidth="4" />
						<path d="M20 22H22M24 22H27" stroke="#e02020" strokeWidth="2" />
						<path d="M3 23.5H33" stroke="#2020d0" />
					</svg>
				</button>
				<button aria-label="Liste" className="flex flex-1 items-center justify-center border-l border-[#8090a0]">
					<svg width="8" height="4" viewBox="0 0 8 4"><path d="M0 0H8L4 4Z" /></svg>
				</button>
			</div>
			<OrderPanel />
		</div>
	);
}

function TitleBar() {
	return (
		<header className="flex h-[23px] items-start border-b border-white bg-gradient-to-b from-[#76adff] to-[#5890ee] text-white">
			<div className="flex h-[20px] w-[68px] shrink-0 items-center">
				<button aria-label="Fermer">
					<svg width="16" height="20" viewBox="0 0 16 20"><path d="M3 6L11 14M11 6L3 14" stroke="#fff" strokeWidth="2" /></svg>
				</button>
				<button aria-label="Réduire">
					<svg width="14" height="20" viewBox="0 0 14 20"><path d="M2 13H11" stroke="#fff" strokeWidth="2" /></svg>
				</button>
				<button aria-label="Restaurer">
					<svg width="16" height="20" viewBox="0 0 16 20" fill="none" stroke="#fff">
						<path d="M6.5 8V5.5H11.5V10.5H9M6 6H12M3.5 9.5H8.5V13.5H3.5ZM3 9H9" />
					</svg>
				</button>
				<button aria-label="Clavier">
					<svg width="22" height="20" viewBox="0 0 22 20" fill="none">
						<rect x="2" y="4" width="20" height="14" rx="2" fill="#fff" />
						<path d="M5 7.5H19M5 9.5H19M5 11.5H19" stroke="#4878d8" strokeDasharray="1 1" />
						<path d="M8 14.5H16" stroke="#4878d8" />
					</svg>
				</button>
			</div>
			<div className="flex h-[20px] flex-1 items-center justify-center whitespace-nowrap font-bold">
				<svg width="16" height="18" viewBox="0 0 16 18" fill="none" stroke="#fff" aria-hidden="true">
					<path d="M4 6V17M11.5 2V5M11.5 14V17" />
					<rect x="1.5" y="8.5" width="5" height="6" fill="#fff" />
					<rect x="8.5" y="4.5" width="6" height="9" />
				</svg>
				<svg width="8" height="4" viewBox="0 0 8 4" className="ml-1"><path d="M0 0H7L3.5 4Z" fill="#fff" /></svg>
				<span className="ml-[5px]">EURJPY</span>
				<button aria-label="Informations" className="ml-3">
					<svg width="12" height="12" viewBox="0 0 12 12">
						<rect width="12" height="12" fill="#eef2f6" />
						<path d="M5 2H7V4H5ZM4 5H7V9H8V10H4V9H5V6H4Z" fill="#7c8c94" />
					</svg>
				</button>
				<span className="ml-[9px] border border-[#800000] bg-[#b41414] px-px leading-[13px]">121,304 (-0,12%)</span>
				<span className="ml-[5px]">21:46:04 EUR/JPY Mini</span>
			</div>
		</header>
	);
}

function Counter({ label, cross, box }: { label: string; cross: string; box: string }) {
	return (
		<div className="flex w-[292px] items-center">
			<span>{label} :</span>
			<b className="ml-[6px]">0</b>
			<span className="ml-[3px]"><CancelMark cross={cross} box={box} /></span>
			<span className="ml-[10px]">/</span>
			<b className="ml-[5px] mr-px">0</b>
			<Gears />
		</div>
	);
}

export default function App() {
	return (
		<main className={clsx('w-full bg-white text-[11px] leading-[13px] text-black', FONT)}>
			<TitleBar />
			<div className="flex h-[21px] items-center border-b border-[#6e8a98] bg-[#9ebac6] pl-[180px]">
				<Counter label="Ordres" cross="#f0f0ec" box="#bcc0be" />
				<Counter label="Position" cross="#d08080" box="#b8c0c4" />
				<span className="w-[248px]">Gain latent :&nbsp; <b>-</b></span>
				<span>Gain Jour :&nbsp; <b>-</b></span>
			</div>
			<div className="border-t border-[#dce8ee]">
				<Toolbar />
			</div>
			<PriceChart />
			<StochasticChart />
		</main>
	);
}
